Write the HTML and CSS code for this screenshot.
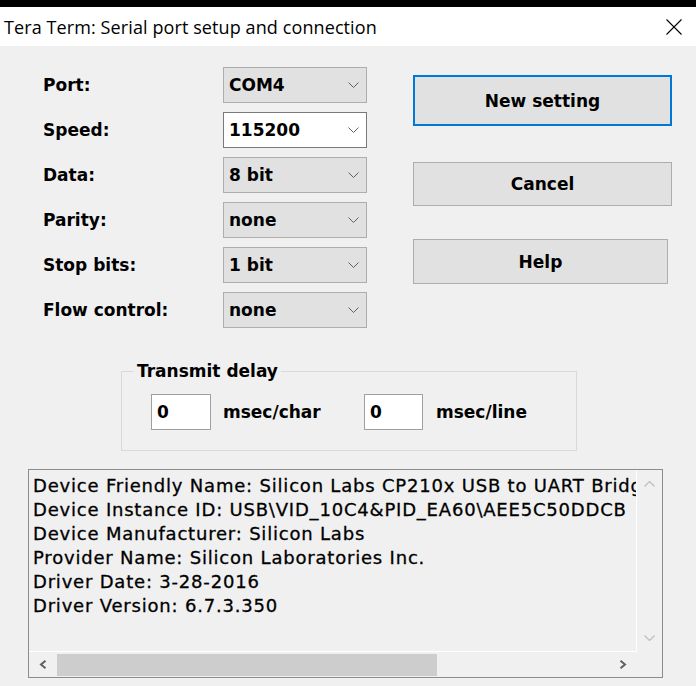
FILE: index.html
```html
<!DOCTYPE html>
<html>
<head>
<meta charset="utf-8">
<title>Tera Term: Serial port setup and connection</title>
<link rel="stylesheet" href="styles.css">
</head>
<body>
<div class="topbar"></div>
<div class="titlebar">
  <span class="title">Tera Term: Serial port setup and connection</span>
  <svg class="close" width="16" height="16" viewBox="0 0 16 16"><path d="M0.5 0.5L15.5 15.5M15.5 0.5L0.5 15.5" stroke="#000" stroke-width="1.1" fill="none"/></svg>
</div>
<div class="dialog">
  <div class="upper">
    <div class="form">
      <span class="label">Port:</span>
      <div class="combo"><span>COM4</span><svg class="chev" width="11" height="6" viewBox="0 0 11 6"><polyline points="0.5,0.5 5.5,5.5 10.5,0.5" fill="none" stroke="#606060" stroke-width="1"/></svg></div>
      <span class="label">Speed:</span>
      <div class="combo combo-edit"><span>115200</span><svg class="chev" width="11" height="6" viewBox="0 0 11 6"><polyline points="0.5,0.5 5.5,5.5 10.5,0.5" fill="none" stroke="#606060" stroke-width="1"/></svg></div>
      <span class="label">Data:</span>
      <div class="combo"><span>8 bit</span><svg class="chev" width="11" height="6" viewBox="0 0 11 6"><polyline points="0.5,0.5 5.5,5.5 10.5,0.5" fill="none" stroke="#606060" stroke-width="1"/></svg></div>
      <span class="label">Parity:</span>
      <div class="combo"><span>none</span><svg class="chev" width="11" height="6" viewBox="0 0 11 6"><polyline points="0.5,0.5 5.5,5.5 10.5,0.5" fill="none" stroke="#606060" stroke-width="1"/></svg></div>
      <span class="label">Stop bits:</span>
      <div class="combo"><span>1 bit</span><svg class="chev" width="11" height="6" viewBox="0 0 11 6"><polyline points="0.5,0.5 5.5,5.5 10.5,0.5" fill="none" stroke="#606060" stroke-width="1"/></svg></div>
      <span class="label">Flow control:</span>
      <div class="combo"><span>none</span><svg class="chev" width="11" height="6" viewBox="0 0 11 6"><polyline points="0.5,0.5 5.5,5.5 10.5,0.5" fill="none" stroke="#606060" stroke-width="1"/></svg></div>
    </div>
    <div class="buttons">
      <div class="btn btn-default">New setting</div>
      <div class="btn btn-cancel">Cancel</div>
      <div class="btn btn-help">Help</div>
    </div>
  </div>

  <div class="group">
    <span class="gtitle">Transmit delay</span>
    <div class="grow">
      <div class="tinput">0</div>
      <span class="tlabel tlabel-char">msec/char</span>
      <div class="tinput tinput-line">0</div>
      <span class="tlabel tlabel-line">msec/line</span>
    </div>
  </div>

  <div class="info">
    <div class="info-text">
      <div class="line">Device Friendly Name: Silicon Labs CP210x USB to UART Bridge (COM4)</div>
      <div class="line">Device Instance ID: USB\VID_10C4&amp;PID_EA60\AEE5C50DDCB</div>
      <div class="line">Device Manufacturer: Silicon Labs</div>
      <div class="line">Provider Name: Silicon Laboratories Inc.</div>
      <div class="line">Driver Date: 3-28-2016</div>
      <div class="line">Driver Version: 6.7.3.350</div>
    </div>
    <div class="vbar">
      <div class="varrow"><svg width="11" height="6" viewBox="0 0 11 6"><polyline points="0.5,5.5 5.5,0.5 10.5,5.5" fill="none" stroke="#bdbdbd" stroke-width="1.2"/></svg></div>
      <div class="varrow"><svg width="11" height="6" viewBox="0 0 11 6"><polyline points="0.5,0.5 5.5,5.5 10.5,0.5" fill="none" stroke="#bdbdbd" stroke-width="1.2"/></svg></div>
    </div>
    <div class="hbar">
      <div class="harrow"><svg width="8" height="9" viewBox="0 0 8 9"><polyline points="6.5,0.8 2,4.5 6.5,8.2" fill="none" stroke="#606060" stroke-width="2"/></svg></div>
      <div class="thumb"></div>
      <div class="hfill"></div>
      <div class="harrow"><svg width="8" height="9" viewBox="0 0 8 9"><polyline points="1.5,0.8 6,4.5 1.5,8.2" fill="none" stroke="#606060" stroke-width="2"/></svg></div>
    </div>
    <div class="corner"></div>
  </div>
</div>
</body>
</html>
```

FILE: styles.css
```css
html, body {
  margin: 0;
  padding: 0;
}
body {
  background: #f0f0f0;
  font-family: "DejaVu Sans", "Liberation Sans", sans-serif;
  color: #000;
  width: 696px;
  height: 686px;
  overflow: hidden;
}
.topbar {
  height: 7px;
  background: #000;
}
.titlebar {
  height: 39px;
  background: #fff;
  display: flex;
  align-items: center;
  justify-content: space-between;
  padding: 0 14px 0 4px;
}
.title {
  font-family: "Open Sans", "Noto Sans", sans-serif;
  font-size: 18px;
  letter-spacing: 0.1px;
  white-space: nowrap;
}
.close {
  display: block;
}
.dialog {
  height: 640px;
  box-sizing: border-box;
  padding-top: 21px;
}
.upper {
  display: flex;
  align-items: flex-start;
}
.form {
  margin-left: 43px;
  display: grid;
  grid-template-columns: 180px 144px;
  grid-auto-rows: 36px;
  row-gap: 9px;
  align-items: center;
}
.label {
  font-weight: bold;
  font-size: 17px;
  white-space: nowrap;
}
.combo {
  box-sizing: border-box;
  height: 36px;
  border: 1px solid #adadad;
  background: #e1e1e1;
  display: flex;
  align-items: center;
  justify-content: space-between;
  padding: 0 7px 0 5px;
  font-weight: bold;
  font-size: 17px;
}
.combo-edit {
  background: #fff;
  border-color: #7a7a7a;
}
.chev {
  display: block;
}
.buttons {
  margin-left: 46px;
  margin-top: 8px;
  display: flex;
  flex-direction: column;
}
.btn {
  box-sizing: border-box;
  width: 259px;
  border: 1px solid #adadad;
  background: #e1e1e1;
  display: flex;
  align-items: center;
  justify-content: center;
  font-weight: bold;
  font-size: 17px;
}
.btn-default {
  height: 51px;
  border: 2px solid #0078d7;
}
.btn-cancel {
  height: 44px;
  margin-top: 36px;
}
.btn-help {
  width: 255px;
  height: 45px;
  margin-top: 33px;
}
.group {
  box-sizing: border-box;
  margin: 43px 0 0 121px;
  width: 456px;
  height: 80px;
  border: 1px solid #d9d9d9;
  display: flex;
  flex-direction: column;
  align-items: flex-start;
}
.gtitle {
  margin: -12px 0 0 12px;
  padding: 0 3px;
  background: #f0f0f0;
  font-weight: bold;
  font-size: 17px;
  line-height: 22px;
}
.grow {
  display: flex;
  align-items: center;
  margin: 12px 0 0 29px;
}
.tinput {
  box-sizing: border-box;
  width: 60px;
  height: 36px;
  background: #fff;
  border: 1px solid #a0a0a0;
  padding-left: 5px;
  display: flex;
  align-items: center;
  font-weight: bold;
  font-size: 17px;
}
.tinput-line {
  width: 59px;
}
.tlabel {
  font-weight: bold;
  font-size: 17px;
  white-space: nowrap;
}
.tlabel-char {
  margin-left: 12px;
  width: 141px;
}
.tlabel-line {
  margin-left: 13px;
}
.info {
  box-sizing: border-box;
  margin: 18px 0 0 28px;
  width: 635px;
  height: 209px;
  border: 1px solid #8c8c8c;
  display: grid;
  grid-template-columns: 1fr 25px;
  grid-template-rows: 1fr 25px;
}
.info-text {
  overflow: hidden;
  border-right: 1px solid #fff;
  border-bottom: 1px solid #fff;
  padding: 4px 0 0 4px;
  font-size: 18px;
  letter-spacing: 0.8px;
  line-height: 24px;
  -webkit-text-stroke: 0.3px #000;
}
.line {
  white-space: nowrap;
}
.vbar {
  display: flex;
  flex-direction: column;
  justify-content: space-between;
}
.varrow {
  height: 28px;
  display: flex;
  align-items: center;
  justify-content: center;
}
.varrow svg, .harrow svg {
  display: block;
}
.hbar {
  display: flex;
  align-items: center;
}
.harrow {
  width: 28px;
  height: 100%;
  display: flex;
  align-items: center;
  justify-content: center;
}
.thumb {
  width: 380px;
  height: 22px;
  background: #cdcdcd;
}
.hfill {
  flex: 1;
}
.corner {
  background: #f0f0f0;
}
```
